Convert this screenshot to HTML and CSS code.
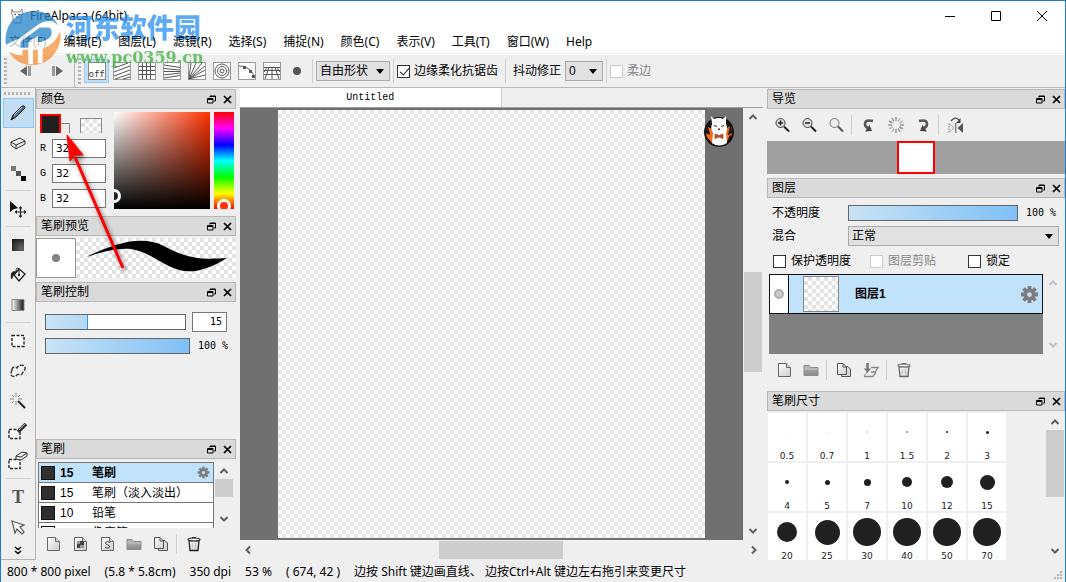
FILE: index.html
```html
<!DOCTYPE html>
<html lang="zh-CN">
<head>
<meta charset="utf-8">
<title>FireAlpaca (64bit)</title>
<link rel="stylesheet" href="styles.css">
</head>
<body>
<svg class="defs" aria-hidden="true">
  <defs>
    <linearGradient id="paper" x1="0" y1="0" x2="1" y2="1"><stop offset="0" stop-color="#fff"/><stop offset="1" stop-color="#ccc"/></linearGradient>
    <linearGradient id="gray-down" x1="0" y1="0" x2="0" y2="1"><stop offset="0" stop-color="#bbb"/><stop offset="1" stop-color="#888"/></linearGradient>
    <linearGradient id="black-fade" x1="0" y1="0" x2="1" y2="0"><stop offset="0" stop-color="#fff"/><stop offset="1" stop-color="#111"/></linearGradient>
    <radialGradient id="dark-fill" cx=".8" cy=".8" r="1"><stop offset="0" stop-color="#666"/><stop offset="1" stop-color="#1c1c1c"/></radialGradient>
    <symbol id="float" viewBox="0 0 9 9"><path d="M3 2.500V1H8.500V6H7M3 1.500H8.500M.5 3.500H6V8H.5ZM.5 4.500H6" fill="none" stroke="#000"/></symbol>
    <symbol id="close" viewBox="0 0 9 9"><path d="M1 1L8 8M8 1L1 8" stroke="#000" stroke-width="1.700"/></symbol>
    <symbol id="page" viewBox="0 0 16 16"><path d="M2.500 1.500H10.500L14.500 5.500V14.500H2.500Z" fill="url(#paper)" stroke="#666"/><path d="M10.500 1.500V5.500H14.500" fill="#ddd" stroke="#666"/></symbol>
    <symbol id="folder" viewBox="0 0 16 16"><path d="M1 3.500H6L8 5.500H15V13.500H1Z" fill="url(#gray-down)" stroke="#8c8c8c"/><path d="M1.500 7H14.500" stroke="#c8c8c8"/></symbol>
    <symbol id="copy" viewBox="0 0 16 16"><path d="M5.500 4.500H12L14.500 7V14.500H5.500Z" fill="#d8d8d8" stroke="#555"/><path d="M1.500 1.500H7L10.500 5V12.500H1.500Z" fill="url(#paper)" stroke="#555"/><path d="M7 1.500V5H10.500" fill="none" stroke="#555"/></symbol>
    <symbol id="trash" viewBox="0 0 16 16"><path d="M3 4.500H13L12 14.500H4Z" fill="url(#paper)" stroke="currentColor" stroke-width="1.300"/><ellipse cx="8" cy="3.500" rx="6" ry="1.500" fill="#eee" stroke="currentColor" stroke-width="1.200"/><path d="M6 1.500H10" stroke="currentColor"/><path d="M6.300 7V12M9.500 7V12" stroke="#bbb"/></symbol>
    <symbol id="gear" viewBox="0 0 20 20"><g stroke="#7d7d7d" stroke-width="4"><path d="M10 1V19M1 10H19M3.700 3.700L16.300 16.300M16.300 3.700L3.700 16.300"/></g><circle cx="10" cy="10" r="6.300" fill="#7d7d7d"/><circle cx="10" cy="10" r="2.500" fill="#c1e2fb"/></symbol>
    <symbol id="chev" viewBox="0 0 10 10"><path d="M1.500 7L5 3.500L8.500 7" fill="none" stroke="currentColor" stroke-width="2"/></symbol>
  </defs>
</svg>

<div class="window">
  <header class="titlebar">
    <svg class="app-icon" viewBox="0 0 14 16"><path d="M2 1L3 4H10L12 1L12.500 6L11 8V15H3V8L1.500 6Z" fill="#fff" stroke="#888"/><path d="M4 6.500H6M8 6.500H10M6 9H8.500" stroke="#555"/></svg>
    <h1 class="title">FireAlpaca (64bit)</h1>
    <div class="caption-buttons">
      <button class="caption" aria-label="最小化"><svg viewBox="0 0 10 10"><path d="M0 5.500H10" stroke="#000"/></svg></button>
      <button class="caption" aria-label="最大化"><svg viewBox="0 0 10 10"><path d="M.5 .5H9.500V9.500H.5Z" fill="none" stroke="#000"/></svg></button>
      <button class="caption" aria-label="关闭"><svg viewBox="0 0 10 10"><path d="M0 0L10 10M10 0L0 10" stroke="#000"/></svg></button>
    </div>
  </header>

  <nav class="menubar">
    <button>文件(F)</button><button>编辑(E)</button><button>图层(L)</button><button>滤镜(R)</button><button>选择(S)</button><button>捕捉(N)</button><button>颜色(C)</button><button>表示(V)</button><button>工具(T)</button><button>窗口(W)</button><button>Help</button>
  </nav>

  <div class="toolbar">
    <div class="history">
      <i class="grip"></i>
      <button class="step" aria-label="撤销"><svg viewBox="0 0 14 12"><path d="M8 1V11L1 6Z" fill="#666"/><path d="M10.500 1V11" stroke="#999" stroke-width="3"/></svg></button>
      <button class="step" aria-label="重做"><svg viewBox="0 0 14 12"><path d="M6 1V11L13 6Z" fill="#666"/><path d="M3.500 1V11" stroke="#999" stroke-width="3"/></svg></button>
    </div>
    <i class="grip"></i>
    <div class="snaps">
      <button class="snap on" aria-label="关闭捕捉"><span class="off">off</span></button>
      <button class="snap" aria-label="平行"><svg viewBox="0 0 18 18"><rect x=".5" y=".5" width="17" height="17"/><path d="M1 6L15 1M1 10L17 4M1 14L17 8M2 17L17 12M10 17L17 15"/></svg></button>
      <button class="snap" aria-label="十字"><svg viewBox="0 0 18 18"><rect x=".5" y=".5" width="17" height="17"/><path d="M4.500 1V17M8.500 1V17M12.500 1V17M1 4.500H17M1 8.500H17M1 12.500H17"/></svg></button>
      <button class="snap" aria-label="消失点"><svg viewBox="0 0 18 18"><rect x=".5" y=".5" width="17" height="17"/><path d="M1 3L17 5.500M1 6.500L17 8M1 9.500H17M1 13L17 11M1 16L17 13.500"/></svg></button>
      <button class="snap" aria-label="放射"><svg viewBox="0 0 18 18"><rect x=".5" y=".5" width="17" height="17"/><path d="M1 17L3 1M1 17L8 1M1 17L14 1M1 17L17 4M1 17L17 8M1 17L17 13"/></svg></button>
      <button class="snap" aria-label="同心圆"><svg viewBox="0 0 18 18"><rect x=".5" y=".5" width="17" height="17"/><circle cx="9" cy="9" r="7"/><circle cx="9" cy="9" r="4.500"/><circle cx="9" cy="9" r="2"/></svg></button>
      <button class="snap" aria-label="曲线"><svg viewBox="0 0 18 18"><rect x=".5" y=".5" width="17" height="17"/><path d="M1 4C9 4 15 9 16 15"/><path class="solid" d="M5 4h3v3h-3zM11 8h3v3h-3zM14 13h3v3h-3z"/></svg></button>
      <button class="snap" aria-label="透视"><svg viewBox="0 0 18 18"><rect x=".5" y=".5" width="17" height="17"/><path d="M1 5.500H17M1 8.500H17M1 12.500H17M6 5.500L2 17M9 5.500V17M12 5.500L16 17M4 5.500L1 10M14 5.500L17 10"/></svg></button>
      <button class="snap" aria-label="设置"><svg viewBox="0 0 18 18"><circle class="solid" cx="9" cy="9" r="4"/></svg></button>
    </div>
    <i class="vsep"></i>
    <span class="select shape"><select aria-label="形状"><option>自由形状</option></select></span>
    <i class="vsep"></i>
    <label class="check"><input type="checkbox" checked>边缘柔化抗锯齿</label>
    <i class="vsep wide"></i>
    <label class="stabil">抖动修正<span class="select num"><select><option>0</option></select></span></label>
    <i class="vsep"></i>
    <label class="check disabled"><input type="checkbox" disabled>柔边</label>
  </div>

  <main class="workspace">
    <aside class="tools">
      <i class="grip-h"></i>
      <button class="tool on" aria-label="画笔"><svg viewBox="0 0 20 20"><path d="M3 17L5 12L14 3Q17 2 17 5L8 14Z" fill="#56718a" stroke="#222"/><path d="M6 12L14 4" stroke="#b9d0e2"/><path d="M3 17L4.500 13.500L6.500 15.500Z" fill="#111"/></svg></button>
      <button class="tool" aria-label="橡皮擦"><svg viewBox="0 0 20 20"><path d="M3 9L12 5L17 8V11L8 16L3 12Z" fill="#eee" stroke="#333"/><path d="M3 9L8 12L17 8M8 12V16" fill="none" stroke="#333"/></svg></button>
      <button class="tool" aria-label="点"><svg viewBox="0 0 20 20"><path d="M3 3h5v5h-5z" fill="#777"/><path d="M8 8h5v5h-5z" fill="#555"/><path d="M13 13h5v5h-5z" fill="#000"/></svg></button>
      <hr>
      <button class="tool" aria-label="移动"><svg viewBox="0 0 20 20"><path d="M2 2V13L5 10.500L10 9Z" fill="#111"/><path d="M12.500 8V18M7.500 13H17.500" stroke="#222" stroke-width="1.200"/><path d="M10.500 9.500L12.500 7L14.500 9.500ZM10.500 16.500L12.500 19L14.500 16.500ZM9 11L6.500 13L9 15ZM16 11L18.500 13L16 15Z" fill="#222"/></svg></button>
      <hr>
      <button class="tool" aria-label="填充"><svg viewBox="0 0 20 20"><path d="M4 4h12v12h-12z" fill="url(#dark-fill)"/></svg></button>
      <button class="tool" aria-label="油漆桶"><svg viewBox="0 0 20 20"><path d="M6 10L11 4L17 9L11 16Z" fill="#eee" stroke="#222" stroke-width="1.300"/><path d="M11 10V3.500Q8 1.500 8 7" fill="none" stroke="#222"/><path d="M8 7Q2 5 3.500 14Q4.500 10 7 9Z" fill="#222" stroke="#222"/><circle cx="11" cy="10" r="1.200" fill="#222"/></svg></button>
      <button class="tool" aria-label="渐变"><svg viewBox="0 0 20 20"><path d="M4 4.500h12v11h-12z" fill="url(#black-fade)" stroke="#888"/></svg></button>
      <hr>
      <button class="tool" aria-label="选择"><svg viewBox="0 0 20 20"><path d="M4 4.500h12v11h-12z" fill="#fff" stroke="#222" stroke-width="1.400" stroke-dasharray="3 1.500"/></svg></button>
      <button class="tool" aria-label="套索"><svg viewBox="0 0 20 20"><path d="M4 9C4 6 7 5 9 7C10 4 16 3 17 6C18 9 15 10 14 13C12 15 10 12 9 14C6 17 2 15 3 12Z" fill="#f6f6f6" stroke="#333" stroke-width="1.400" stroke-dasharray="4 1.500"/></svg></button>
      <button class="tool" aria-label="魔棒"><svg viewBox="0 0 20 20"><path d="M8 2V6M8 10V14M2 8H6M10 8H14M4 4L6 6M12 4L10 6M4 12L6 10" stroke="#888"/><path d="M10 10L17 17" stroke="#222" stroke-width="2"/></svg></button>
      <button class="tool" aria-label="选择笔"><svg viewBox="0 0 20 20"><path d="M1 8.500h11v9h-11z" fill="#fff" stroke="#222" stroke-width="1.400" stroke-dasharray="3 1.500"/><path d="M10 11L18 3" stroke="#333" stroke-width="3.500"/><path d="M11 9L17 3" stroke="#aaa"/></svg></button>
      <button class="tool" aria-label="选择擦"><svg viewBox="0 0 20 20"><path d="M1 8.500h11v9h-11z" fill="#fff" stroke="#222" stroke-width="1.400" stroke-dasharray="3 1.500"/><path d="M8 5L14 1L19 2V5L13 9L8 8Z" fill="#eee" stroke="#333"/><path d="M8 5L13 6L19 2" fill="none" stroke="#333"/></svg></button>
      <hr>
      <button class="tool text-tool" aria-label="文字">T</button>
      <button class="tool" aria-label="操作"><svg viewBox="0 0 20 20"><path d="M4 4L16 8L12 10L16 15L14 17L9 12L7 16Z" fill="#fff" stroke="#555" stroke-width="1.200"/></svg></button>
      <button class="more" aria-label="更多"><svg viewBox="0 0 8 9"><path d="M1 1L4 3.500L7 1M1 5L4 7.500L7 5" fill="none" stroke="#000" stroke-width="1.500"/></svg></button>
    </aside>

    <div class="docks">
      <section class="dock">
        <div class="dock-head"><h2>颜色</h2><button aria-label="浮动"><svg><use href="#float"/></svg></button><button aria-label="关闭"><svg><use href="#close"/></svg></button></div>
        <div class="color-body">
          <div class="color-left">
            <div class="swatches"><button class="fg" aria-label="前景色"></button><button class="bg" aria-label="背景色"></button><button class="clear checker" aria-label="透明"></button></div>
            <label class="rgb">R<input type="text" value="32"></label>
            <label class="rgb">G<input type="text" value="32"></label>
            <label class="rgb">B<input type="text" value="32"></label>
          </div>
          <div class="sv"><i class="ring sv-ring"></i></div>
          <div class="hue"><i class="ring hue-ring"></i></div>
        </div>
      </section>
      <section class="dock">
        <div class="dock-head"><h2>笔刷预览</h2><button aria-label="浮动"><svg><use href="#float"/></svg></button><button aria-label="关闭"><svg><use href="#close"/></svg></button></div>
        <div class="preview">
          <div class="tip"><i></i></div>
          <svg class="stroke checker" viewBox="0 0 160 40" preserveAspectRatio="none"><path d="M10 19C40 5 65-3 88 8C115 23 130 21 151 20C133 31 118 36 103 32C84 26 74 14 55 11C38 10 25 15 10 19Z"/></svg>
        </div>
      </section>
      <section class="dock grow">
        <div class="dock-head"><h2>笔刷控制</h2><button aria-label="浮动"><svg><use href="#float"/></svg></button><button aria-label="关闭"><svg><use href="#close"/></svg></button></div>
        <div class="control">
          <div class="control-row"><input class="slider partial" type="range" aria-label="笔刷大小" value="30" style="--fill:30%"><input class="size" type="text" aria-label="大小" value="15"></div>
          <div class="control-row"><input class="slider" type="range" aria-label="笔刷不透明度" value="100"><output>100 %</output></div>
        </div>
      </section>
      <section class="dock">
        <div class="dock-head"><h2>笔刷</h2><button aria-label="浮动"><svg><use href="#float"/></svg></button><button aria-label="关闭"><svg><use href="#close"/></svg></button></div>
        <div class="brushes">
          <ul class="brush-list">
            <li class="on"><i class="chip"></i><span class="px">15</span><span class="name">笔刷</span><svg class="gear"><use href="#gear"/></svg></li>
            <li><i class="chip"></i><span class="px">15</span><span class="name">笔刷（淡入淡出）</span></li>
            <li><i class="chip"></i><span class="px">10</span><span class="name">铅笔</span></li>
            <li><i class="chip empty"></i><span class="px"></span><span class="name">像素笔</span></li>
          </ul>
          <div class="scroll-v"><svg><use href="#chev"/></svg><i class="thumb brush-thumb"></i><svg class="down"><use href="#chev"/></svg></div>
        </div>
        <div class="icon-row">
          <button aria-label="新建"><svg><use href="#page"/></svg></button>
          <button aria-label="位图笔刷"><svg viewBox="0 0 16 16"><use href="#page"/><path d="M8 5h4v4h-4zM5 8h3v4h-3z" fill="#444"/><path d="M5 5h3v3h-3zM8 9h4v3h-4z" fill="#999"/></svg></button>
          <button aria-label="脚本笔刷"><svg viewBox="0 0 16 16"><use href="#page"/><path d="M11 6.500Q8 4.500 6.500 6.500Q6 8.300 8.500 8.700Q11.500 9.500 10.300 11.500Q8 13 6 11.300" fill="none" stroke="#444"/></svg></button>
          <button aria-label="文件夹"><svg><use href="#folder"/></svg></button>
          <button aria-label="复制"><svg><use href="#copy"/></svg></button>
          <i class="vsep"></i>
          <button class="dark" aria-label="删除"><svg><use href="#trash"/></svg></button>
        </div>
      </section>
    </div>

    <section class="center">
      <div class="tabs"><button class="tab">Untitled</button></div>
      <div class="stage-row">
        <div class="stage">
          <div class="artboard"></div>
          <svg class="mascot" viewBox="0 0 30 32"><circle cx="15" cy="17" r="14" fill="#ef6a1a" stroke="#111" stroke-width="2"/><path d="M2 18Q2 6 12 4L8 14L4 12L6 20ZM28 18Q28 8 20 4L23 13L26 11L24 20ZM3 22L8 28L5 26ZM22 29L26 20L28 21Q27 27 22 29Z" fill="#111"/><path d="M7 1L10 4Q15 2 19 4L22 1L22 9Q24 14 22 18L23 28Q15 33 8 28L9 18Q6 14 8 9Z" fill="#fff"/><path d="M10 10.500L13 11.500M17 11.500L20 10.500M14 14H16L15 15Z" stroke="#333" fill="#333"/><path d="M11 19L15 20.500L19 19V23.500L15 22L11 23.500Z" fill="#d9501c" stroke="#7a2b10" stroke-width=".6"/></svg>
        </div>
        <div class="scroll-v"><svg><use href="#chev"/></svg><i class="thumb stage-thumb"></i><svg class="down"><use href="#chev"/></svg></div>
      </div>
      <div class="scroll-h"><svg class="left"><use href="#chev"/></svg><i class="thumb"></i><svg class="right"><use href="#chev"/></svg></div>
    </section>

    <div class="docks right-docks">
      <section class="dock">
        <div class="dock-head"><h2>导览</h2><button aria-label="浮动"><svg><use href="#float"/></svg></button><button aria-label="关闭"><svg><use href="#close"/></svg></button></div>
        <div class="icon-row nav-icons">
          <button aria-label="放大"><svg viewBox="0 0 16 16"><circle cx="6.500" cy="6" r="4.500" fill="#ddd" stroke="#444"/><path d="M6.500 3.500V8.500M4 6H9" stroke="#222" stroke-width="1.500"/><path d="M10 9.500L15 14.500" stroke="#222" stroke-width="2"/></svg></button>
          <button aria-label="缩小"><svg viewBox="0 0 16 16"><circle cx="6.500" cy="6" r="4.500" fill="#ddd" stroke="#444"/><path d="M4 6H9" stroke="#222" stroke-width="1.500"/><path d="M10 9.500L15 14.500" stroke="#222" stroke-width="2"/></svg></button>
          <button aria-label="适应"><svg viewBox="0 0 16 16"><circle cx="6.500" cy="6" r="4.500" fill="#eee" stroke="#777"/><path d="M10 9.500L15 14.500" stroke="#555" stroke-width="2"/></svg></button>
          <i class="vsep"></i>
          <button aria-label="左旋"><svg viewBox="0 0 16 16"><path d="M12 4Q4 2 4 7Q4 10 7 11" fill="none" stroke="#555" stroke-width="2.500"/><path d="M4 14.500L11 14L8.500 8Z" fill="#444"/></svg></button>
          <button aria-label="重置旋转"><svg viewBox="0 0 16 16"><g stroke="#999" stroke-width="1.500"><path d="M8 0V4M8 12V16M0 8H4M12 8H16M4 1L6 4.600M12 15L10 11.400M1 4L4.600 6M15 12L11.400 10"/><path stroke="#bbb" d="M12 1L10 4.600M4 15L6 11.400M15 4L11.400 6M1 12L4.600 10"/></g></svg></button>
          <button aria-label="右旋"><svg viewBox="0 0 16 16"><path d="M4 4Q12 2 12 7Q12 10 9 11" fill="none" stroke="#555" stroke-width="2.500"/><path d="M12 14.500L5 14L7.500 8Z" fill="#444"/></svg></button>
          <i class="vsep"></i>
          <button aria-label="翻转"><svg viewBox="0 0 16 16"><path d="M3 4Q7-1 11 3" fill="none" stroke="#555" stroke-width="1.300"/><path d="M12.500 1V6H8Z" fill="#444"/><path d="M15 6V16L9.500 11Z" fill="#555"/><path d="M1 6.500V15.500L6 11Z" fill="none" stroke="#777" stroke-dasharray="1.500 1"/><path d="M7.800 6V16" stroke="#555"/></svg></button>
        </div>
        <div class="navigator"><i></i></div>
      </section>
      <section class="dock">
        <div class="dock-head"><h2>图层</h2><button aria-label="浮动"><svg><use href="#float"/></svg></button><button aria-label="关闭"><svg><use href="#close"/></svg></button></div>
        <div class="layer-form">
          <label for="opacity">不透明度</label><div class="opacity"><input id="opacity" class="slider" type="range" value="100"><output>100 %</output></div>
          <label for="blend">混合</label><span class="select"><select id="blend"><option>正常</option></select></span>
        </div>
        <div class="layer-checks">
          <label class="check"><input type="checkbox">保护透明度</label>
          <label class="check disabled"><input type="checkbox" disabled>图层剪贴</label>
          <label class="check"><input type="checkbox">锁定</label>
        </div>
        <div class="layers">
          <div class="layer-list">
            <div class="layer"><button class="eye" aria-label="显示"><i></i></button><i class="thumbnail checker"></i><span class="layer-name">图层1</span><svg class="gear"><use href="#gear"/></svg></div>
          </div>
          <div class="scroll-v faint"><svg><use href="#chev"/></svg><svg class="down"><use href="#chev"/></svg></div>
        </div>
        <div class="icon-row layer-icons">
          <button aria-label="新建图层"><svg><use href="#page"/></svg></button>
          <button aria-label="图层文件夹"><svg><use href="#folder"/></svg></button>
          <i class="vsep"></i>
          <button aria-label="复制图层"><svg><use href="#copy"/></svg></button>
          <button aria-label="向下合并"><svg viewBox="0 0 16 16"><path d="M8 5.500H15L12 10H8M1 14.500H10L13 10" fill="none" stroke="#888" stroke-width="1.300"/><path d="M1 14L4 10" stroke="#888"/><path d="M4.500 1V8" stroke="#777" stroke-width="2.500"/><path d="M1 6.500H8L4.500 11Z" fill="#777"/></svg></button>
          <i class="vsep"></i>
          <button aria-label="删除图层"><svg><use href="#trash"/></svg></button>
        </div>
      </section>
      <section class="dock">
        <div class="dock-head"><h2>笔刷尺寸</h2><button aria-label="浮动"><svg><use href="#float"/></svg></button><button aria-label="关闭"><svg><use href="#close"/></svg></button></div>
        <div class="sizes">
          <div class="size-grid">
            <button><i style="--d:1px;opacity:.1"></i>0.5</button><button><i style="--d:1px;opacity:.2"></i>0.7</button><button><i style="--d:2px;opacity:.2"></i>1</button><button><i style="--d:2px;opacity:.5"></i>1.5</button><button><i style="--d:2px"></i>2</button><button><i style="--d:3px"></i>3</button>
            <button><i style="--d:4px"></i>4</button><button><i style="--d:5px"></i>5</button><button><i style="--d:7px"></i>7</button><button><i style="--d:10px"></i>10</button><button><i style="--d:12px"></i>12</button><button><i style="--d:15px"></i>15</button>
            <button><i style="--d:20px"></i>20</button><button><i style="--d:25px"></i>25</button><button><i style="--d:28px"></i>30</button><button><i style="--d:28px"></i>40</button><button><i style="--d:28px"></i>50</button><button><i style="--d:28px"></i>70</button>
          </div>
          <div class="scroll-v"><svg><use href="#chev"/></svg><i class="thumb size-thumb"></i><svg class="down"><use href="#chev"/></svg></div>
        </div>
      </section>
    </div>
  </main>

  <footer class="status">
    <span>800 * 800 pixel</span><span>(5.8 * 5.8cm)</span><span>350 dpi</span><span>53 %</span><span>( 674, 42 )</span><span>边按 Shift 键边画直线、 边按Ctrl+Alt 键边左右拖引来变更尺寸</span>
    <svg class="resize" viewBox="0 0 9 9"><path d="M6 0h2v2h-2zM6 3h2v2h-2zM3 3h2v2h-2zM6 6h2v2h-2zM3 6h2v2h-2zM0 6h2v2h-2z" fill="#b4b4b4"/></svg>
  </footer>

  <div class="watermark">
    <svg class="wm-logo" viewBox="0 0 60 60">
      <circle cx="29" cy="29" r="27" fill="#fff"/>
      <path d="M1 36C-2 16 12 1 30 1C42 1 51 7 55 16L50 12Q43 10 36 14L14 30Q7 32 1 36Z" fill="#2383c8"/>
      <path d="M16 33L36 18H46Q50 22 47 28Q42 33 34 33V27L24 33V39H16Z" fill="#2383c8"/>
      <path d="M57 22C60 38 48 56 30 57C18 58 8 51 4 43Q11 47 18 47V41H24V56H29V41H34V55H39V40Q52 36 57 22Z" fill="#f3923a"/>
    </svg>
    <div class="wm-text"><strong>河东软件园</strong><b>www.pc0359.cn</b></div>
  </div>
  <svg class="arrow" viewBox="0 0 70 146"><path d="M63 138L15 27" stroke="#f00" stroke-width="3"/><path d="M7 5L23 25L15 25L10 31Z" fill="#f00" stroke="#f00"/></svg>
</div>
</body>
</html>
```
FILE: styles.css
```css
* { box-sizing: border-box; }
body { margin: 0; font: 12px/16px "Noto Sans", "Noto Sans CJK SC", sans-serif; color: #000; }
button, input, select { margin: 0; padding: 0; border: 0; border-radius: 0; background: none; font: inherit; color: inherit; }
i { display: block; flex: none; }
svg { display: block; flex: none; }
h1, h2 { margin: 0; font-size: 12px; font-weight: 400; }
.defs { position: absolute; width: 0; height: 0; }

.window { position: relative; display: flex; flex-direction: column; min-height: 100vh; border: 1px solid #1a7fd4; background: #efefef; overflow: hidden; }

.titlebar { display: flex; align-items: center; height: 30px; padding-left: 9px; background: #fff; }
.app-icon { width: 14px; height: 16px; margin-right: 6px; }
.title { flex: 1; }
.caption-buttons { display: flex; }
.caption { display: grid; place-items: center; width: 46px; height: 28px; }
.caption svg { width: 10px; height: 10px; }
.menubar { display: flex; gap: 17px; height: 23px; padding-left: 8px; background: #fff; border-bottom: 1px solid #eee; }
.menubar button { position: relative; z-index: 2; white-space: nowrap; }
.menubar button:first-child { z-index: 0; }

.toolbar { display: flex; align-items: center; height: 34px; border-top: 1px solid #fff; border-bottom: 1px solid #b8b8b8; }
.toolbar, .check, .docks { font-family: "Liberation Sans", "Noto Sans CJK SC", sans-serif; }
.grip { width: 3px; height: 26px; margin-left: 3px; background: repeating-linear-gradient(#b4b4b4 0 2px, #efefef 2px 4px); }
.history { display: flex; align-items: center; width: 74px; height: 100%; border-right: 1px solid #b8b8b8; }
.step { display: grid; place-items: center; width: 31px; margin-left: 3px; height: 24px; }
.step + .step { margin-left: 0; }
.step svg { width: 14px; height: 12px; }
.snaps { display: flex; padding-left: 3px; }
.snap { display: grid; place-items: center; width: 25px; height: 24px; }
.snap.on { background: #c2def4; border: 1px solid #99caf0; }
.snap svg { width: 18px; height: 18px; fill: #fff; stroke: #555; }
.snap rect { stroke: #999; }
.snap path { fill: none; }
.snap .solid { fill: #555; stroke: none; }
.off { width: 18px; height: 18px; padding-top: 5px; border: 1px solid #888; background: #fff; font: 9px/12px "DejaVu Sans Mono", monospace; color: #333; text-align: center; }
.vsep { align-self: center; width: 1px; height: 24px; margin: 0 3px; background: #cfcfcf; }
.vsep.wide { margin: 0 7px; }
.select { position: relative; display: flex; height: 20px; border: 1px solid #aaa; background: #e1e1e1; }
.select::after { content: ""; position: absolute; right: 5px; top: 7px; border: 4px solid transparent; border-top: 5px solid #000; border-bottom: 0; pointer-events: none; }
.select select { flex: 1; width: 100%; padding-left: 3px; appearance: none; }
.select.shape { width: 74px; }
.select.num { width: 38px; }
.check { display: flex; align-items: center; gap: 5px; white-space: nowrap; }
.check input { appearance: none; width: 13px; height: 13px; border: 1px solid #333; background: #fff; }
.check input:checked::after { content: ""; display: block; width: 4px; height: 8px; margin-left: 4px; border: solid #222; border-width: 0 1px 1px 0; transform: rotate(40deg); }
.toolbar .check { gap: 4px; }
.check.disabled { color: #888; }
.check.disabled input { border-color: #ccc; }
.stabil { display: flex; align-items: center; gap: 4px; white-space: nowrap; }

.workspace { flex: 1; display: flex; min-height: 0; }
.tools { display: flex; flex-direction: column; align-items: center; width: 35px; border-right: 1px solid #b4b4b4; border-bottom: 1px solid #b4b4b4; }
.grip-h { width: 28px; height: 3px; margin: 4px 0 3px; background: repeating-linear-gradient(90deg, #b4b4b4 0 2px, #efefef 2px 4px); }
.tool { display: grid; place-items: center; width: 31px; height: 30px; }
.tool.on { background: #c2def4; border: 1px solid #8ec5f2; }
.tool svg { width: 20px; height: 20px; }
.text-tool { font: 700 18px/20px "Liberation Serif", serif; color: #555; }
.tools hr { width: 25px; height: 1px; margin: 2px 0 3px; border: 0; background: #d0d0d0; }
.more { padding: 4px; }
.more svg { width: 8px; height: 9px; }

.docks { display: flex; flex-direction: column; gap: 2px; width: 200px; padding-top: 1px; }
.grow { flex: 1; }
.dock-head { display: flex; align-items: center; height: 20px; padding-left: 4px; border: 1px solid #b8b8b8; background: #dadada; }
.dock-head h2 { flex: 1; }
.dock-head button { display: grid; place-items: center; width: 16px; height: 16px; }
.dock-head svg { width: 9px; height: 9px; }
.checker { background: repeating-conic-gradient(#e2e2e2 0 25%, #fff 0 50%) 0 0 / 8px 8px; }

.color-body { display: flex; gap: 4px; height: 105px; padding: 3px 2px 5px 4px; }
.color-left { flex: 1; }
.swatches { display: flex; height: 21px; margin-bottom: 6px; overflow: hidden; padding-top: 2px; }
.swatches button { height: 24px; }
.fg { width: 21px; border: 2px solid #f00; background: #202020; }
.bg { width: 9px; margin-top: 9px; border: 1px solid #888; border-left: 0; background: #f5eaea; }
.clear { width: 22px; margin: 4px 0 0 10px; border: 1px solid #888; }
.rgb { display: flex; align-items: center; justify-content: space-between; height: 19px; margin-bottom: 6px; font: 10px/16px "Liberation Mono", monospace; }
.rgb input { width: 54px; height: 19px; margin-right: 4px; padding-left: 3px; border: 1px solid #777; background: #fff; font: 11px/16px "DejaVu Sans Mono", monospace; }
.sv { position: relative; width: 96px; overflow: hidden; background: linear-gradient(to top, #000, transparent), linear-gradient(to right, #fff, #ff3000); }
.hue { position: relative; width: 20px; overflow: hidden; background: linear-gradient(#f00, #f0f 17%, #00f 34%, #0ff 50%, #0f0 67%, #ff0 84%, #f00); }
.ring { position: absolute; width: 14px; height: 14px; border: 3px solid #fff; border-radius: 50%; }
.sv-ring { left: -7px; bottom: 6px; }
.hue-ring { left: 3px; bottom: -4px; background: #ff3000; }

.preview { display: flex; height: 44px; padding: 2px 0; }
.tip { display: grid; place-items: center; width: 40px; border: 1px solid #999; background: #fff; }
.tip i { width: 8px; height: 8px; border-radius: 50%; background: #808080; }
.stroke { flex: 1; min-width: 0; height: 40px; }
.control { display: grid; gap: 5px; padding: 10px 8px 10px 9px; }
.control-row { display: flex; align-items: center; gap: 6px; height: 19px; }
.slider { flex: 1; min-width: 0; height: 16px; appearance: none; border: 1px solid #666; background: linear-gradient(90deg, #c8e3f5, #7fc0f7); }
.slider.partial { background: linear-gradient(90deg, transparent var(--fill), #fff 0), linear-gradient(90deg, transparent calc(var(--fill) - 1px), #3a90e0 0), linear-gradient(90deg, #c8e3f5, #7fc0f7); }
.slider::-webkit-slider-thumb { appearance: none; width: 1px; height: 14px; background: transparent; }
.size { width: 35px; height: 20px; margin-right: 1px; padding-right: 4px; border: 1px solid #777; background: #fff; text-align: right; font: 10px/16px "DejaVu Sans Mono", monospace; }
output { width: 32px; text-align: right; font: 10px/16px "DejaVu Sans Mono", monospace; white-space: pre; }

.brushes { display: flex; height: 69px; padding: 3px 2px 0; }
.brush-list { flex: 1; margin: 0; padding: 0; list-style: none; border: 1px solid #777; border-bottom: 0; overflow: hidden; }
.brush-list li { display: flex; align-items: center; height: 20px; padding: 0 3px 0 2px; border-bottom: 1px solid #777; background: #fff; }
.brush-list li.on { background: #c1e2fb; font-weight: 700; }
.chip { width: 14px; height: 14px; margin-right: 5px; border: 1px solid #111; background: #303030; }
.chip.empty { background: #fff; }
.px { width: 32px; }
.name { flex: 1; }
.brush-list .gear { width: 13px; height: 13px; }

.scroll-v { position: relative; display: flex; flex-direction: column; align-items: center; justify-content: space-between; width: 20px; padding: 4px 0; color: #606060; }
.scroll-v svg, .scroll-h svg { width: 10px; height: 10px; }
.down { transform: rotate(180deg); }
.left { transform: rotate(-90deg); }
.right { transform: rotate(90deg); }
.thumb { background: #cdcdcd; }
.scroll-v .thumb { position: absolute; left: 1px; right: 1px; }
.brush-thumb { top: 17px; height: 18px; }
.stage-thumb { top: 38%; height: 23%; }
.size-thumb { top: 17px; height: 67px; }
.scroll-v.faint { color: #c0c0c0; }

.icon-row { display: flex; align-items: center; height: 32px; padding-left: 3px; color: #666; }
.icon-row button { display: grid; place-items: center; width: 27px; height: 28px; }
.icon-row svg { width: 16px; height: 16px; }
.icon-row .vsep { margin: 0 3px 0 2px; height: 20px; }
.icon-row .dark { color: #222; }

.center { flex: 1; display: flex; flex-direction: column; min-width: 0; margin: 0 4px; }
.tabs { display: flex; height: 20px; border-bottom: 1px solid #a0a0a0; }
.tab { width: 50%; border-right: 1px solid #ccc; background: #fff; font: 10px/16px "Liberation Mono", monospace; }
.stage-row { flex: 1; display: flex; }
.stage { position: relative; flex: 1; display: flex; padding: 2px 38px; background: #707070; }
.artboard { flex: 1; background: repeating-conic-gradient(#e8e8e8 0 25%, #f8f8f8 0 50%) 0 0 / 8px 8px; }
.mascot { position: absolute; top: 7px; right: 9px; width: 30px; height: 32px; }
.scroll-h { display: flex; align-items: center; justify-content: space-between; height: 20px; padding: 0 4px 0 3px; color: #606060; }
.scroll-h .thumb { width: 24%; height: 18px; }

.right-docks { width: 298px; }
.nav-icons { padding-left: 1px; }
.navigator { display: flex; justify-content: center; height: 33px; margin-bottom: 2px; background: #a0a0a0; }
.navigator i { width: 38px; border: 2px solid #f00; background: #fff; }
.layer-form { display: grid; grid-template-columns: 71px 1fr; align-items: center; gap: 5px; padding: 7px 6px 0 5px; }
.opacity { display: flex; align-items: center; gap: 6px; padding-right: 3px; }
.layer-checks { display: grid; grid-template-columns: 97px 98px 1fr; padding: 7px 6px 5px; }
.layers { display: flex; padding: 0 2px; }
.layer-list { flex: 1; height: 80px; background: #808080; }
.layer { display: flex; align-items: center; height: 40px; padding-right: 3px; border: 1px solid #111; background: #c1e2fb; }
.eye { display: grid; place-items: center; width: 19px; height: 38px; border-right: 1px solid #111; background: #fff; }
.eye i { width: 10px; height: 10px; border: 2px solid #b0b0b0; border-radius: 50%; background: #ccc; }
.thumbnail { width: 36px; height: 36px; margin: 0 16px 0 14px; border: 1px solid #888; }
.layer-name { flex: 1; font-weight: 700; }
.layer .gear { width: 19px; height: 19px; }
.layer-icons { margin-bottom: 3px; }
.sizes { display: flex; justify-content: space-between; padding: 2px 0 0 1px; }
.size-grid { display: grid; grid-template-columns: repeat(6, 38px); gap: 2px; height: 147px; overflow: hidden; }
.size-grid button { display: flex; flex-direction: column; align-items: center; height: 48px; background: #fff; font: 9px/10px "DejaVu Sans", sans-serif; color: #222; }
.size-grid i { width: var(--d); height: var(--d); margin: calc(19px - var(--d) / 2) 0; border-radius: 50%; background: #202020; }

.status { display: flex; align-items: center; gap: 14px; height: 23px; padding-left: 6px; white-space: nowrap; }
.resize { width: 9px; height: 9px; margin: 8px 2px 0 auto; }

.watermark { position: absolute; z-index: 1; left: 4px; top: 9px; display: flex; gap: 3px; opacity: .75; pointer-events: none; }
.wm-logo { width: 58px; height: 58px; }
.wm-text { display: flex; flex-direction: column; color: #2a8ff0; }
.wm-text strong { font: 900 27px/34px "Noto Sans CJK SC", sans-serif; }
.wm-text b { font: 700 16px/28px "DejaVu Serif", serif; color: #3fae3f; }
.arrow { position: absolute; left: 59px; top: 129px; width: 70px; height: 146px; pointer-events: none; filter: drop-shadow(2px 3px 2px rgba(0, 0, 0, .5)); }
```
